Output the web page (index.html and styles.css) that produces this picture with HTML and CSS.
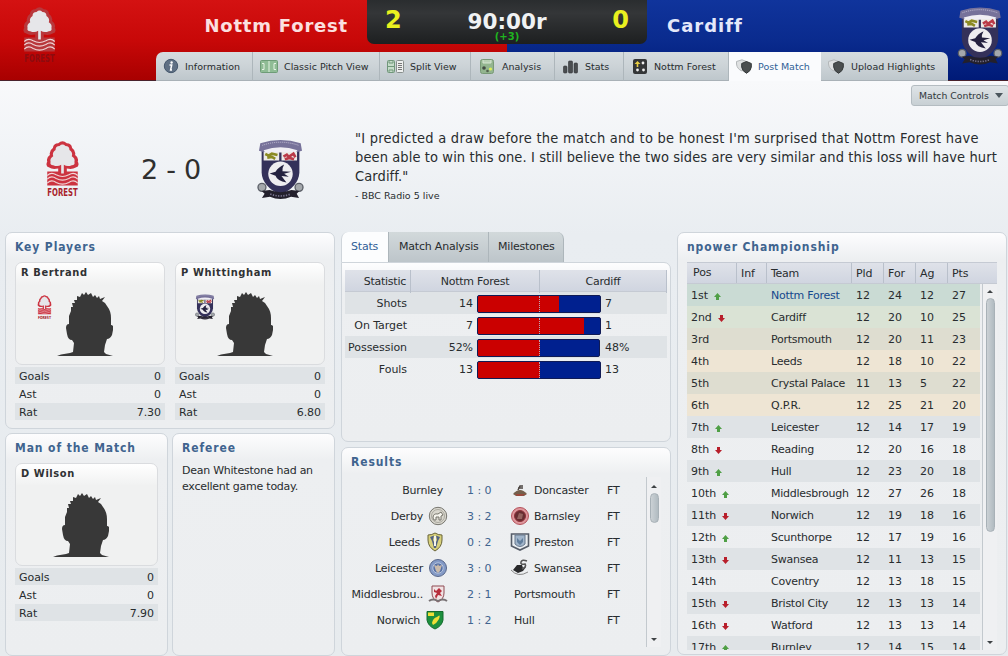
FILE: index.html
```html
<!DOCTYPE html>
<html lang="en">
<head>
    <meta charset="UTF-8">
    <meta name="viewport" content="width=device-width, initial-scale=1.0">
    <title>Nottm Forest 2 - 0 Cardiff</title>
    <link rel="stylesheet" href="styles.css">
</head>
<body>
    <!-- shared drawings -->
    <svg class="defs" width="0" height="0">
        <symbol id="forest" viewBox="0 0 102 175">
            <path class="f-edge" d="M38 7 Q51-5 64 7 Q78 7 80 21 Q92 29 89 42 Q101 50 97 62 Q104 76 91 80 Q80 87 64 83 V92 H97 V134 H5 V92 H38 V83 Q20 87 11 80 Q-2 76 5 62 Q1 50 13 42 Q10 29 22 21 Q24 7 38 7Z"/>
            <path class="f-tree" d="M42 15 Q51 6 60 15 Q72 15 72 27 Q83 34 79 46 Q90 53 87 63 Q90 72 79 73 Q66 79 55 72 V98 H47 V72 Q36 79 23 73 Q12 72 15 63 Q12 53 23 46 Q19 34 30 27 Q30 15 42 15Z"/>
            <path class="f-wave" d="M5 104 Q17 92 32 102 Q51 112 70 102 Q85 92 97 104 M5 115 Q17 103 32 113 Q51 123 70 113 Q85 103 97 115 M5 127 Q17 115 32 125 Q51 135 70 125 Q85 115 97 127"/>
            <text class="f-text" x="51" y="165" text-anchor="middle" textLength="92" lengthAdjust="spacingAndGlyphs">FOREST</text>
        </symbol>
        <symbol id="cardiff" viewBox="0 0 142 182">
            <path fill="#34315a" d="M14 32 H128 V100 Q126 142 71 168 Q16 142 14 100Z"/>
            <path fill="#77729a" d="M6 34 L10 12 Q71-9 132 12 L136 34 L122 38 Q71 18 20 38Z"/>
            <path fill="#f0eef4" d="M20 33 Q71 15 122 33 L118 40 H24Z"/>
            <path fill="none" stroke="#c5c0d6" stroke-width="3" stroke-dasharray="3 3" d="M16 18 Q71-1 126 18"/>
            <path fill="#eceae6" d="M20 38 H67 V64 H20Z M74 38 H121 V64 H74Z"/>
            <path fill="none" stroke="#8b8a23" stroke-width="8" d="M25 44 L35 49 L45 43 L62 47 M31 55 L45 53 L55 59"/>
            <path fill="none" stroke="#ba3a48" stroke-width="8" d="M80 52 L90 46 L96 53 L110 43 L116 54 M84 60 L98 56 L112 60"/>
            <circle cx="71" cy="104" r="37" fill="#eeedf0"/>
            <path fill="#24213f" d="M38 103 L56 98 Q64 84 82 76 Q75 88 77 96 L103 98 L82 104 L96 113 L74 111 L89 130 Q61 126 56 110Z"/>
            <g fill="#a4a8ac" stroke="#5b5f67" stroke-width="4">
                <circle cx="15" cy="145" r="12"/><circle cx="127" cy="145" r="12"/>
            </g>
            <path fill="#23202c" d="M14 156 L38 153 Q71 166 104 153 L128 156 L120 164 L127 177 L103 173 Q71 188 39 173 L15 177 L23 164Z"/>
            <path fill="none" stroke="#77738f" stroke-width="5" stroke-dasharray="4 4" d="M40 165 Q71 177 102 165"/>
        </symbol>
        <symbol id="head" viewBox="0 0 56 64">
            <path fill="#383838" d="M0 64 L4 62.4 L13 61 L16 60 L17 51 L15 48 Q11 48 10 42 L9 36 Q9 32 12 32 L12 24 L14 19 L14 15 L16 15 L15 11 L18 11 L17 8 L20 8 L20 4 L23 5 L25 1 L27 3 L29 0 L31 3 L34 1 L36 5 L38 3 L40 6 L42 4 L43 7 L48 5 L45 9 L48 11 L50 14 Q54 19 54 26 L54 33 Q57 33 56 38 L55 43 Q53 47 50 47 L48 53 L47 60 L49 62 L56 64Z"/>
        </symbol>
        <symbol id="up" viewBox="0 0 7 7"><path fill="#4f9f45" d="M3.5 0 L7 4 H5 V7 H2 V4 H0Z"/></symbol>
        <symbol id="down" viewBox="0 0 7 7"><path fill="#b81f2b" d="M3.5 7 L0 3 H2 V0 H5 V3 H7Z"/></symbol>
        <symbol id="shields" viewBox="0 0 16 15">
            <path fill="#dfe1e2" stroke="#b4b8ba" d="M.5 2.5 L6 .8 L10.5 2.5 V7 Q10 10 6 12 Q1 10 .5 5Z"/>
            <path fill="#4b4f50" stroke="#35393a" d="M5.7 4.5 L10.5 2.5 L15.3 4.5 V8 Q15 12 10.5 14.3 Q6 12 5.7 8Z"/>
        </symbol>
    </svg>

    <header>
        <div class="side home">
            <svg class="head-forest pale"><use href="#forest"/></svg>
            <span>Nottm Forest</span>
        </div>
        <div class="side away">
            <span>Cardiff</span>
            <svg class="head-cardiff"><use href="#cardiff"/></svg>
        </div>
        <div class="scoreboard">
            <b class="goals">2</b>
            <div class="clock">90:00r<small>(+3)</small></div>
            <b class="goals">0</b>
        </div>
        <nav>
            <a class="t-info"><svg width="16" height="16" viewBox="0 0 16 16"><circle cx="8" cy="8" r="6.7" fill="#5f7084" stroke="#45576d"/><circle cx="8.6" cy="4.5" r="1.2" fill="#fff"/><path d="M6.5 7 H8.7 L7.6 12 H9" fill="none" stroke="#fff" stroke-width="1.5"/></svg>Information</a>
            <a class="t-pitch"><svg width="18" height="13" viewBox="0 0 18 13"><rect x=".5" y=".5" width="17" height="12" rx="1" fill="#8fbc95" stroke="#6e9c77"/><path d="M9 1 V12 M2 3.5 H4 V9.5 H2 M16 3.5 H14 V9.5 H16" fill="none" stroke="#e5f3e5"/></svg>Classic Pitch View</a>
            <a class="t-split"><svg width="17" height="13" viewBox="0 0 17 13"><rect x=".5" y=".5" width="7" height="12" rx="1" fill="#c5dcc9" stroke="#70977a"/><path d="M2 1 V3 H6 V1 M1 6.5 H7 M2 12 V10 H6 V12" fill="none" stroke="#70977a"/><rect x="9.5" y=".5" width="7" height="12" rx="1" fill="#eef0ef" stroke="#888f8d"/><path d="M11 3.5 H15 M11 5.5 H15 M11 7.5 H15 M11 9.5 H15" stroke="#777"/></svg>Split View</a>
            <a class="t-analysis"><svg width="14" height="15" viewBox="0 0 14 15"><rect x=".5" y=".5" width="13" height="14" rx="2" fill="#93b58f" stroke="#799a77"/><path d="M3 1 V4 H11 V1" fill="#b7cfb3" stroke="#d7e5d3"/><circle cx="4" cy="9" r="1.8" fill="#424c42"/><circle cx="10.5" cy="10" r="1.6" fill="#dcf05a"/><circle cx="7.5" cy="12" r="1.3" fill="#54624e"/></svg>Analysis</a>
            <a class="t-stats"><svg width="15" height="15" viewBox="0 0 15 15"><g fill="#4a4d50" stroke="#303335" stroke-width=".6"><rect x=".5" y="7" width="3.5" height="7" rx="1"/><rect x="5.5" y="2" width="4" height="12" rx="1"/><rect x="11" y="4" width="3.5" height="10" rx="1"/></g></svg>Stats</a>
            <a class="t-team"><svg width="14" height="15" viewBox="0 0 14 15"><rect width="14" height="15" rx="2" fill="#343638"/><path d="M4.5 2 L7.5 5 H5.3 V8 H3.7 V5 H1.5Z" fill="#e9ce43"/><circle cx="10" cy="4" r="1.4" fill="#eee"/><circle cx="4.5" cy="11" r="1.4" fill="#eee"/><circle cx="10.5" cy="11" r="1.4" fill="#eee"/></svg>Nottm Forest</a>
            <a class="t-post active"><svg width="16" height="15"><use href="#shields"/></svg>Post Match</a>
            <a class="t-upload"><svg width="16" height="15"><use href="#shields"/></svg>Upload Highlights</a>
        </nav>
    </header>

    <section class="summary">
        <button class="controls">Match Controls <i></i></button>
        <div class="score">
            <svg class="big-forest"><use href="#forest"/></svg>
            <span>2 - 0</span>
            <svg class="big-cardiff"><use href="#cardiff"/></svg>
        </div>
        <blockquote>
            <p><span class="first-line">"I predicted a draw before the match and to be honest I'm surprised that Nottm Forest have</span><br>been able to win this one. I still believe the two sides are very similar and this loss will have hurt<br>Cardiff."</p>
            <cite>- BBC Radio 5 live</cite>
        </blockquote>
    </section>

    <main>
        <div class="column left">
            <section class="panel key">
                <h2>Key Players</h2>
                <div class="players">
                    <div class="player">
                        <div class="card">
                            <h3>R Bertrand</h3>
                            <svg class="mini mini-forest"><use href="#forest"/></svg>
                            <svg class="face"><use href="#head"/></svg>
                        </div>
                        <dl><dt>Goals</dt><dd>0</dd></dl>
                        <dl><dt>Ast</dt><dd>0</dd></dl>
                        <dl><dt>Rat</dt><dd>7.30</dd></dl>
                    </div>
                    <div class="player">
                        <div class="card">
                            <h3>P Whittingham</h3>
                            <svg class="mini mini-cardiff"><use href="#cardiff"/></svg>
                            <svg class="face"><use href="#head"/></svg>
                        </div>
                        <dl><dt>Goals</dt><dd>0</dd></dl>
                        <dl><dt>Ast</dt><dd>0</dd></dl>
                        <dl><dt>Rat</dt><dd>6.80</dd></dl>
                    </div>
                </div>
            </section>
            <div class="pair">
                <section class="panel">
                    <h2>Man of the Match</h2>
                    <div class="player">
                        <div class="card solo">
                            <h3>D Wilson</h3>
                            <svg class="face"><use href="#head"/></svg>
                        </div>
                        <dl><dt>Goals</dt><dd>0</dd></dl>
                        <dl><dt>Ast</dt><dd>0</dd></dl>
                        <dl><dt>Rat</dt><dd>7.90</dd></dl>
                    </div>
                </section>
                <section class="panel">
                    <h2>Referee</h2>
                    <p class="referee">Dean Whitestone had an<br>excellent game today.</p>
                </section>
            </div>
        </div>

        <div class="column middle">
            <div class="subtabs">
                <a class="active">Stats</a><a>Match Analysis</a><a>Milestones</a>
            </div>
            <section class="panel stats">
                <div class="stat head"><span>Statistic</span><span>Nottm Forest</span><span>Cardiff</span></div>
                <div class="stat"><span>Shots</span><b>14</b><div class="bar"><i style="width: 66.3%"></i></div><b>7</b></div>
                <div class="stat"><span>On Target</span><b>7</b><div class="bar"><i style="width: 87%"></i></div><b>1</b></div>
                <div class="stat"><span>Possession</span><b>52%</b><div class="bar short"><i style="width: 51%"></i></div><b>48%</b></div>
                <div class="stat"><span>Fouls</span><b>13</b><div class="bar"><i style="width: 50.5%"></i></div><b>13</b></div>
            </section>
            <section class="panel results">
                <h2>Results</h2>
                <div class="results-body">
                    <div class="result-list">
                        <div class="result"><span class="home-team plain">Burnley</span><em>1 : 0</em><span class="away-team"><svg viewBox="0 0 20 20"><path fill="#74604c" d="M3 14 Q10 6 17 14 L14 16 H6Z"/><path fill="#9b493c" d="M5 14 H16 L12 16 H7Z"/><path d="M8 10 L10 6 H13 M8 8 H13" fill="none" stroke="#4b4541" stroke-width="1.5"/></svg>Doncaster</span><span>FT</span></div>
                        <div class="result"><span class="home-team">Derby<svg viewBox="0 0 20 20"><circle cx="10" cy="10" r="8.7" fill="#d9d7ce" stroke="#77766f"/><circle cx="10" cy="10" r="6.5" fill="none" stroke="#aaa89f"/><path fill="#f6f5ee" stroke="#77756c" d="M5 12 Q5 7 10 8 L13 6 L15 9 L13 10 V14 H11 V11 H8 V14 H6Z"/></svg></span><em>3 : 2</em><span class="away-team"><svg viewBox="0 0 20 20"><circle cx="10" cy="10" r="8.5" fill="#de969c" stroke="#b5525c"/><circle cx="10" cy="10" r="5.5" fill="#682d32" stroke="#8d3039"/><path d="M7 13 L9 7 L13 8 L12 13Z" fill="#95625f"/></svg>Barnsley</span><span>FT</span></div>
                        <div class="result"><span class="home-team leeds">Leeds<svg viewBox="0 0 20 20"><path fill="#d8d17b" stroke="#696438" d="M3 3 Q7 3 10 1 Q13 3 17 3 V8 Q17 15 10 19 Q3 15 3 8Z"/><path fill="#526182" d="M5 5 L9 3.5 L8 8 L10 12 L12 8 L11 3.5 L15 5 L13 9 L11 16 H9 L7 9Z"/><path stroke="#f5f5e9" stroke-width="2" d="M10 4 V14"/></svg></span><em>0 : 2</em><span class="away-team"><svg viewBox="0 0 20 20"><path fill="#e9edf1" stroke="#555c68" stroke-width="1.6" d="M1.5 2 H18.5 V14 L10 18 L1.5 14Z"/><path fill="#a0b4ca" stroke="#68788c" d="M5 3 H15 V12 Q10 17 5 12Z"/><path d="M7 6 L10 9 L13 6 V10 L10 13 L7 10Z" fill="#617e9d"/></svg>Preston</span><span>FT</span></div>
                        <div class="result"><span class="home-team">Leicester<svg viewBox="0 0 20 20"><circle cx="10" cy="10" r="8.5" fill="#849ac6" stroke="#58678b"/><circle cx="10" cy="10" r="5.2" fill="#5670a6" stroke="#b9c6dd"/><path fill="#c9baab" d="M6 7 L9 8 L10 6 L11 8 L14 7 L12 13 L10 15 L8 13Z"/></svg></span><em>3 : 0</em><span class="away-team"><svg viewBox="0 0 20 20"><path d="M1 12 Q8 20 18 14" fill="none" stroke="#888"/><path fill="#29292b" d="M3 12 L7 7 L12 7 L13 10 L16 9 L13 13 L8 15Z"/><path d="M12 11 Q17 9 15 6 Q10 7 11 4 Q12 1 17 3" fill="none" stroke="#555" stroke-width="1.6"/></svg>Swansea</span><span>FT</span></div>
                        <div class="result"><span class="home-team">Middlesbrou..<svg viewBox="0 0 20 20"><path fill="#f0e3e4" stroke="#8f4b53" d="M4 2 H16 V9 Q16 15 10 18 Q4 15 4 9Z"/><path fill="#b72e3c" d="M6 5 L8 7 L11 4 L14 7 L12 9 L14 12 L10 11 L8 15 L7 12 L9 9 L6 8Z"/><path d="M1 17 Q5 14 10 17 Q15 14 19 17" fill="none" stroke="#777173" stroke-width="2"/></svg></span><em>2 : 1</em><span class="away-team plain">Portsmouth</span><span>FT</span></div>
                        <div class="result"><span class="home-team leeds">Norwich<svg viewBox="0 0 20 20"><path fill="#1d903e" stroke="#146b2d" d="M2 1.5 H18 V10 Q17 16 10 19 Q3 16 2 10Z"/><path fill="#f0df36" d="M3 2.5 H9 V6 H3Z M7 13 Q8 8 12 7 Q16 3 14 9 Q12 13 8 15Z"/></svg></span><em>1 : 2</em><span class="away-team plain">Hull</span><span>FT</span></div>
                    </div>
                    <div class="scroll small"><i class="arrow-up"></i><div class="thumb"></div><i class="arrow-down"></i></div>
                </div>
            </section>
        </div>

        <section class="panel league">
            <h2>npower Championship</h2>
            <div class="row titles"><span>Pos</span><span>Inf</span><span>Team</span><span>Pld</span><span>For</span><span>Ag</span><span>Pts</span></div>
            <div class="league-body">
                <div class="rows" id="rows"></div>
                <div class="scroll"><i class="arrow-up"></i><div class="thumb"></div><i class="arrow-down"></i></div>
            </div>
        </section>
    </main>

    <script>
        let table = [
            ["1st", "up", "Nottm Forest", 12, 24, 12, 27],
            ["2nd", "down", "Cardiff", 12, 20, 10, 25],
            ["3rd", "", "Portsmouth", 12, 20, 11, 23],
            ["4th", "", "Leeds", 12, 18, 10, 22],
            ["5th", "", "Crystal Palace", 11, 13, 5, 22],
            ["6th", "", "Q.P.R.", 12, 25, 21, 20],
            ["7th", "up", "Leicester", 12, 14, 17, 19],
            ["8th", "down", "Reading", 12, 20, 16, 18],
            ["9th", "up", "Hull", 12, 23, 20, 18],
            ["10th", "up", "Middlesbrough", 12, 27, 26, 18],
            ["11th", "down", "Norwich", 12, 19, 18, 16],
            ["12th", "up", "Scunthorpe", 12, 17, 19, 16],
            ["13th", "down", "Swansea", 12, 11, 13, 15],
            ["14th", "", "Coventry", 12, 13, 18, 15],
            ["15th", "down", "Bristol City", 12, 13, 13, 14],
            ["16th", "down", "Watford", 12, 13, 13, 14],
            ["17th", "up", "Burnley", 12, 14, 15, 14]
        ];
        let html = "";
        table.forEach(team => {
            let arrow = team[1] ? `<svg><use href="#${team[1]}"/></svg>` : "";
            html += `<div class="row"><span>${team[0]}${arrow}</span><span></span>`;
            team.slice(2).forEach(value => {
                html += `<span>${value}</span>`;
            });
            html += "</div>";
        });
        document.getElementById("rows").innerHTML = html;
    </script>
</body>
</html>
```
FILE: styles.css
```css
* {
    box-sizing: border-box;
}
body {
    margin: 0;
    width: 1008px;
    height: 656px;
    overflow: hidden;
    font-family: "DejaVu Sans", sans-serif;
    font-size: 11px;
    color: #282c2e;
    background: linear-gradient(#f8f9fb 81px, #e9edf1 235px, #e7ebee);
}
svg {
    display: block;
    flex: none;
}
.defs {
    position: absolute;
}
h2, h3, p, dl, dd, blockquote {
    margin: 0;
}

/* header */
header {
    position: relative;
    display: flex;
    height: 81px;
    border-bottom: 1px solid #49222c;
}
.side {
    display: flex;
    color: #e4e8fa;
    font-size: 18px;
    font-weight: bold;
    letter-spacing: 0.8px;
    line-height: 51px;
}
.home {
    width: 507px;
    justify-content: space-between;
    padding: 0 159px 0 22px;
    color: #fbe0e0;
    background: linear-gradient(#d41212, #c80808 50%, #a80000);
}
.away {
    flex: 1;
    justify-content: space-between;
    padding: 0 5px 0 160px;
    background: linear-gradient(#10349c, #0a2b8e 50%, #001a77);
}
.away span {
    letter-spacing: 1px;
}
.head-forest {
    width: 35px;
    height: 58px;
    margin-top: 7px;
}
.head-cardiff {
    width: 46px;
    height: 58px;
    margin-top: 7px;
}
.scoreboard {
    position: absolute;
    left: 367px;
    top: 0;
    width: 280px;
    height: 44px;
    display: flex;
    justify-content: space-between;
    padding: 0 18px;
    border-radius: 0 0 7px 7px;
    background: linear-gradient(#2a2d2f, #343638 30%, #1d1f20);
}
.goals {
    color: #eaf01f;
    font-size: 24px;
    line-height: 41px;
}
.clock {
    padding-top: 11px;
    font-size: 21.5px;
    font-weight: bold;
    line-height: 22px;
    color: #f0f2f3;
    text-align: center;
}
.clock small {
    display: block;
    font-size: 10px;
    line-height: 8px;
    color: #1fb51f;
}
nav {
    position: absolute;
    left: 156px;
    top: 52px;
    display: flex;
    height: 29px;
    border-radius: 7px 7px 0 0;
    overflow: hidden;
}
nav a {
    display: flex;
    align-items: center;
    padding-left: 7px;
    font-size: 9.5px;
    border-right: 1px solid #adb6bb;
    border-bottom: 1px solid #a9b1b7;
    background: linear-gradient(#d6dcdf, #ccd3d7 50%, #bec7cc);
    white-space: nowrap;
}
nav svg {
    margin-right: 6px;
}
.t-info { width: 97px; }
.t-pitch { width: 127px; }
.t-split { width: 91px; }
.t-analysis { width: 84px; padding-left: 9px; }
.t-analysis svg { margin-right: 8px; }
.t-stats { width: 69px; padding-left: 8px; }
.t-stats svg { margin-right: 7px; }
.t-team { width: 105px; padding-left: 9px; }
.t-team svg { margin-right: 7px; }
.t-post { width: 92px; }
.t-upload { width: 127px; border-right: 0; }
.t-upload svg { margin-right: 7px; }
nav .active {
    color: #315f96;
    background: #fafbfd;
    border-color: #fafbfd;
}

/* summary */
.summary {
    position: relative;
    display: flex;
    height: 151px;
}
.controls {
    position: absolute;
    right: -1px;
    top: 4px;
    width: 98px;
    height: 21px;
    padding: 0 0 0 7px;
    display: flex;
    align-items: center;
    gap: 7px;
    border: 1px solid #b4bcc1;
    border-radius: 3px;
    background: linear-gradient(#dfe4e7, #c8d0d4);
    font: 9.3px "DejaVu Sans", sans-serif;
    color: #30373b;
    white-space: nowrap;
}
.controls i {
    border: 4px solid transparent;
    border-top: 5px solid #4b565d;
    border-bottom: 0;
    margin-left: -1px;
}
.score {
    display: flex;
    align-items: center;
    width: 355px;
    padding: 26px 0 0 45px;
    font-size: 27px;
    color: #2f2f2f;
}
.score span {
    width: 60px;
    margin: 0 56px 0 61px;
    letter-spacing: -0.3px;
    white-space: nowrap;
}
.big-forest {
    width: 35px;
    height: 58px;
}
.big-cardiff {
    width: 47px;
    height: 61px;
}
blockquote {
    padding-top: 48px;
    font-family: "DejaVu Sans Condensed", "DejaVu Sans", sans-serif;
    font-stretch: condensed;
    white-space: nowrap;
}
blockquote p {
    font-size: 14.5px;
    line-height: 19px;
    letter-spacing: 0.1px;
}
.first-line {
    letter-spacing: 0.25px;
}
blockquote cite {
    display: block;
    margin-top: 3px;
    font: 9.5px/14px "DejaVu Sans", sans-serif;
}
.f-edge { fill: var(--edge, #cc3340); }
.f-tree { fill: #e6e6e9; }
.f-wave { fill: none; stroke: #f0d5d7; stroke-width: 3.5; }
.f-text { font: bold 30px "DejaVu Sans", sans-serif; fill: var(--name, #a81f2b); }
.pale {
    --edge: #b8383c;
    --name: #8b0c10;
}

/* panels */
main {
    display: grid;
    grid-template-columns: 330px 330px 330px;
    gap: 6px;
    height: 424px;
    padding-left: 5px;
    letter-spacing: -0.05px;
}
.column {
    display: flex;
    flex-direction: column;
}
.panel {
    border: 1px solid #cfd5db;
    border-radius: 7px;
    padding: 0 9px;
    background: linear-gradient(#fdfdfe, #edeff1 26px, #eceef0);
}
h2 {
    font-size: 12px;
    font-family: "DejaVu Sans Condensed", "DejaVu Sans", sans-serif;
    font-stretch: condensed;
    line-height: 28px;
    height: 29px;
    letter-spacing: 0.9px;
    color: #40648f;
    white-space: nowrap;
}
.key {
    height: 197px;
    margin-bottom: 4px;
}
.players {
    display: grid;
    grid-template-columns: 150px 150px;
    gap: 10px;
}
.pair {
    display: grid;
    grid-template-columns: 163px 163px;
    gap: 4px;
    flex: 1;
}
.card {
    display: grid;
    grid-template-columns: 50px 1fr;
    grid-template-rows: 20px 1fr;
    height: 103px;
    margin-bottom: 2px;
    border: 1px solid #dadcdf;
    border-radius: 7px;
    background: linear-gradient(#fff, #f0f1f1 22px, #f0f1f1);
}
h3 {
    grid-column: 1 / 3;
    padding-left: 5px;
    font-size: 11px;
    font-family: "DejaVu Sans Condensed", "DejaVu Sans", sans-serif;
    font-stretch: condensed;
    line-height: 19px;
    letter-spacing: 0.6px;
    color: #303234;
}
.face {
    grid-column: 2;
    width: 56px;
    height: 64px;
    margin: 9px 0 0 -9px;
}
.solo .face {
    margin-left: -13px;
}
.mini-forest {
    width: 15px;
    height: 25px;
    margin: 12px 0 0 21px;
}
.mini-cardiff {
    width: 20px;
    height: 26px;
    margin: 11px 0 0 19px;
}
dl {
    display: flex;
    justify-content: space-between;
    height: 17px;
    margin-bottom: 1px;
    padding: 0 4px;
    line-height: 20px;
}
dl:nth-of-type(odd) {
    background: #dfe3e6;
}
.referee {
    line-height: 16px;
    letter-spacing: -0.25px;
    white-space: nowrap;
}

/* match stats */
.subtabs {
    display: flex;
    height: 30px;
}
.subtabs a {
    line-height: 30px;
    padding: 0 10px;
    border-right: 1px solid #adb6bb;
    background: linear-gradient(#d2d9db, #bdc5ca);
    letter-spacing: -0.2px;
    white-space: nowrap;
}
.subtabs a:first-child {
    width: 48px;
    padding-left: 9px;
    border-left: 1px solid #cfd5db;
    border-radius: 7px 0 0 0;
}
.subtabs a:last-child {
    width: 75px;
    padding: 0 0 0 9px;
    border-radius: 0 7px 0 0;
}
.subtabs a:nth-child(2) {
    width: 100px;
}
.subtabs .active {
    color: #315f96;
    background: #fcfdfe;
}
.stats {
    height: 180px;
    margin-bottom: 5px;
    padding: 7px 3px;
    border-top-left-radius: 0;
}
.stat {
    display: grid;
    grid-template-columns: 62px 66px 132px 1fr;
    height: 22px;
    line-height: 22px;
    text-align: right;
    align-items: center;
}
.stat span, .stat b {
    padding-top: 1px;
}
.stat b {
    font-weight: normal;
}
.stat b:last-child {
    text-align: left;
}
.stat:nth-child(even) {
    background: #dfe3e6;
}
.stat.head {
    grid-template-columns: 66px 129px 127px;
    text-align: center;
    background: linear-gradient(#dfe2e9, #d0d5e0);
    border-bottom: 1px solid #c5cad3;
    letter-spacing: -0.25px;
}
.head span {
    border-right: 1px solid #b9c0cb;
}
.head span:first-child {
    text-align: right;
    padding-right: 4px;
}
.bar {
    position: relative;
    height: 18px;
    margin-left: 4px;
    width: 124px;
    border: 1px solid #101b55;
    border-radius: 2px;
    background: #00208f;
    overflow: hidden;
}
.bar.short {
    width: 123px;
}
.bar i {
    display: block;
    height: 100%;
    background: #cb0000;
}
.bar::after {
    content: "";
    position: absolute;
    left: 61px;
    top: 0;
    height: 18px;
    border-left: 1px dotted #b9a9b9;
}

/* results */
.results {
    flex: 1;
    padding-right: 8px;
}
.results-body {
    display: flex;
    height: 170px;
}
.result-list {
    flex: 1;
}
.result {
    display: grid;
    grid-template-columns: 97px 63px 96px 1fr;
    height: 26px;
    align-items: center;
}
.result em {
    font-style: normal;
    color: #40648f;
    padding-left: 19px;
    letter-spacing: -0.3px;
    word-spacing: 0.5px;
}
.home-team, .away-team {
    display: flex;
    align-items: center;
    justify-content: flex-end;
    gap: 5px;
    letter-spacing: -0.2px;
    white-space: nowrap;
}
.home-team.plain {
    padding-right: 5px;
}
.home-team.leeds {
    padding-right: 3px;
}
.away-team {
    justify-content: flex-start;
    gap: 4px;
    margin-left: -1px;
}
.away-team.plain {
    padding-left: 4px;
}
.result svg {
    width: 20px;
    height: 20px;
}

.scroll {
    display: flex;
    flex-direction: column;
    align-items: center;
    width: 15px;
    padding-top: 6px;
    border-left: 1px solid #c3c9ce;
    background: #eff0f2;
}
.thumb {
    width: 9px;
    height: 234px;
    border-radius: 5px;
    border: 1px solid #a8b1b7;
    background: linear-gradient(90deg, #cbd1d5, #b1bbc1);
}
.small {
    padding-top: 8px;
    margin-right: 1px;
}
.small .thumb {
    height: 30px;
}
.arrow-up, .arrow-down {
    border: 3px solid transparent;
}
.arrow-up {
    border-bottom-color: #3e4245;
    border-top: 0;
    margin-bottom: 5px;
}
.arrow-down {
    margin-top: auto;
    margin-bottom: 6px;
    border-top-color: #3e4245;
    border-bottom: 0;
}

/* league table */
.league {
    height: 423px;
}
.row {
    display: grid;
    grid-template-columns: 50px 30px 85px 32px 32px 32px 1fr;
    height: 22px;
    line-height: 22px;
    white-space: nowrap;
}
.row span {
    padding: 1px 0 0 4px;
}
.row span:nth-child(3) {
    letter-spacing: -0.25px;
}
.row span:first-child {
    display: flex;
    align-items: center;
    gap: 6px;
}
.row svg {
    width: 7px;
    height: 7px;
}
.titles {
    background: linear-gradient(#dfe2e9, #d0d5e0);
    border: 1px solid #c5cad3;
    border-width: 1px 0;
}
.titles span {
    padding-top: 0;
    border-right: 1px solid #b9c0cb;
    line-height: 22px;
    height: 20px;
}
.titles span:first-child {
    padding-left: 6px;
}
.titles span:last-child {
    border-right: 0;
}
.league-body {
    display: flex;
    justify-content: space-between;
    height: 366px;
    overflow: hidden;
}
.rows {
    width: 293px;
}
.rows .row:nth-child(odd) {
    background: #dfe3e6;
}
.rows .row:nth-child(1) {
    background: #cadbd4;
}
.rows .row:nth-child(2) {
    background: #dae3d5;
}
.rows .row:nth-child(3), .rows .row:nth-child(5) {
    background: #deddd0;
}
.rows .row:nth-child(4), .rows .row:nth-child(6) {
    background: #eee5d4;
}
.rows .row:first-child span:nth-child(3) {
    color: #15488d;
}
```
